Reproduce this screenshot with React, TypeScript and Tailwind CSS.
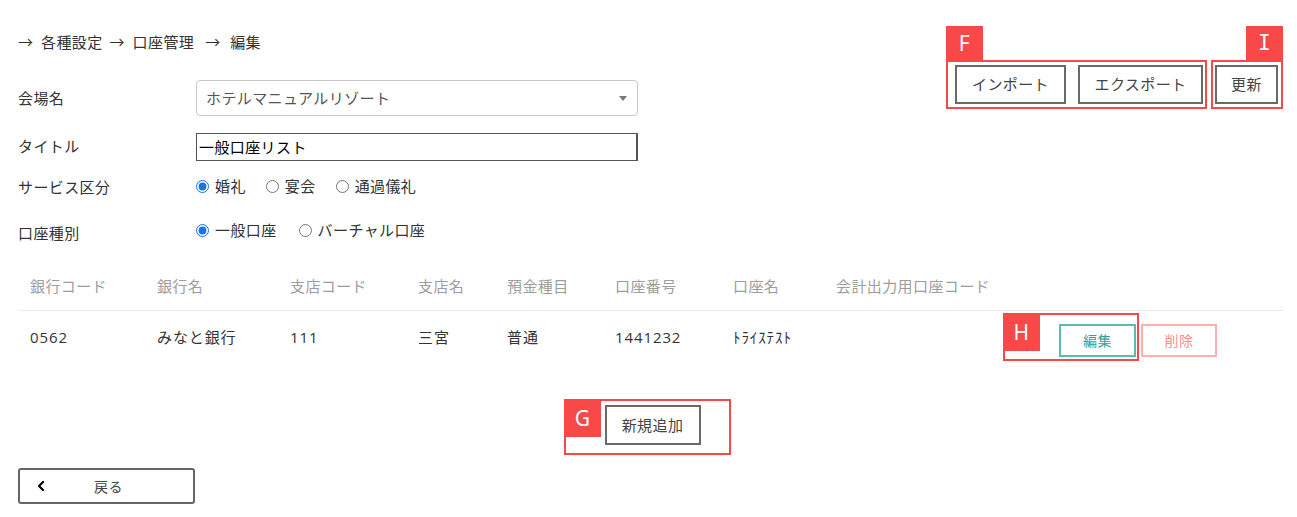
import React from "react";
import { ChevronLeft } from "lucide-react";

const jp = { fontFamily: '"Noto Sans CJK JP", "Noto Sans", sans-serif' };
const num = { fontFamily: '"Open Sans", "Noto Sans CJK JP", sans-serif' };

function Radio({ checked, label, name }: { checked?: boolean; label: string; name: string }) {
  return (
    <label className="flex items-center gap-[6px] h-[22px]">
      <input type="radio" name={name} defaultChecked={checked} className="m-0 w-[13px] h-[13px] accent-[#1a73e8]" />
      <span>{label}</span>
    </label>
  );
}

const cols = [
  { w: "w-[127px]", h: "銀行コード", v: "0562" },
  { w: "w-[133px]", h: "銀行名", v: "みなと銀行" },
  { w: "w-[128px]", h: "支店コード", v: "111" },
  { w: "w-[89px]", h: "支店名", v: "三宮" },
  { w: "w-[108px]", h: "預金種目", v: "普通" },
  { w: "w-[118px]", h: "口座番号", v: "1441232" },
  { w: "w-[103px]", h: "口座名", v: "ﾄﾗｲｽﾃｽﾄ" },
  { w: "w-[224px]", h: "会計出力用口座コード", v: "" },
];

function Tag({ letter, className, mono }: { letter: string; className: string; mono?: boolean }) {
  return (
    <div
      className={"absolute bg-[#f94848] text-white flex items-center justify-center text-[21px] leading-none " + className}
      style={{ fontFamily: mono ? '"DejaVu Sans Mono", monospace' : '"Noto Sans", sans-serif' }}
    >
      {letter}
    </div>
  );
}

export default function App() {
  return (
    <div className="relative w-[1297px] h-[517px] bg-white text-[#333] text-[15px] tracking-[0.4px] overflow-hidden" style={jp}>
      <div className="pl-[18px] pr-[19px]">
        <div className="flex justify-between">
          {/* left form */}
          <div className="flex flex-col">
            <div className="pt-[31px] h-[54px] leading-[22px] text-[#333] flex gap-[7px]">
              <span className="w-[16px]">→</span><span>各種設定</span><span className="w-[16px]">→</span><span>口座管理</span><span className="w-[18px] ml-[4px]">→</span><span>編集</span>
            </div>
            <div className="mt-[26px] flex items-center h-[36px]">
              <div className="w-[178px] leading-[22px]">会場名</div>
              <div className="w-[442px] h-[36px] rounded-[4px] border border-[#c8c8c8] flex items-center justify-between pl-[9px] pr-[10px] text-[#555]">
                <span>ホテルマニュアルリゾート</span>
                <svg width="8" height="5" viewBox="0 0 8 5"><path d="M0 0h8L4 5z" fill="#777" /></svg>
              </div>
            </div>
            <div className="mt-[17px] flex items-center h-[28px]">
              <div className="w-[178px] leading-[22px] mb-[2px]">タイトル</div>
              <div className="w-[442px] h-[28px] border border-[#555] border-r-2 flex items-center pl-[2px] text-black">一般口座リスト</div>
            </div>
            <div className="mt-[14px] flex items-start h-[22px]">
              <div className="w-[178px] leading-[22px] mt-[1px]">サービス区分</div>
              <div className="flex items-center gap-[20px]">
                <Radio name="svc" checked label="婚礼" />
                <Radio name="svc" label="宴会" />
                <Radio name="svc" label="通過儀礼" />
              </div>
            </div>
            <div className="mt-[22px] flex items-start h-[22px]">
              <div className="w-[178px] leading-[22px] mt-[3px]">口座種別</div>
              <div className="flex items-center gap-[22px]">
                <Radio name="kind" checked label="一般口座" />
                <Radio name="kind" label="バーチャル口座" />
              </div>
            </div>
          </div>
          {/* right buttons */}
          <div className="pt-[65px] flex gap-[12px] h-[104px]">
            <button className="w-[111px] h-[39px] border-2 border-[#6a6a6a] bg-white text-[#444]">インポート</button>
            <button className="w-[125px] h-[39px] border-2 border-[#6a6a6a] bg-white text-[#444]">エクスポート</button>
            <button className="w-[63px] h-[39px] border-2 border-[#6a6a6a] bg-white text-[#444]">更新</button>
          </div>
        </div>

        {/* table */}
        <div className="mt-[22px] w-[1266px]">
          <div className="flex items-center h-[48px] border-b border-[#ebebeb] text-[#9d9d9d]">
            {cols.map((c) => (
              <div key={c.h} className={c.w + " pl-[12px]"}>{c.h}</div>
            ))}
          </div>
          <div className="flex items-center h-[52px]">
            {cols.map((c) => (
              <div key={c.h} className={c.w + " pl-[12px] tracking-[0.9px]"} style={num}>{c.v}</div>
            ))}
            <div className="flex items-center gap-[5px] pl-[11px] mt-[6px]">
              <button className="w-[77px] h-[33px] border-2 border-[#5bbcae] bg-white text-[#2fa592] text-[14px]">編集</button>
              <button className="w-[76px] h-[33px] border-2 border-[#ffb0ae] bg-white text-[#ff8f8c] text-[14px]">削除</button>
            </div>
          </div>
        </div>

        <div className="mt-[42px] w-[1266px] flex justify-center">
          <button className="ml-[3px] w-[96px] h-[40px] border-2 border-[#6a6a6a] bg-white text-[#444]">新規追加</button>
        </div>

        <div className="mt-[23px]">
          <button className="w-[177px] h-[36px] rounded-[3px] border-2 border-[#666] bg-white flex items-center text-[#444] text-[14px]">
            <ChevronLeft size={16} strokeWidth={3.2} className="ml-[13px] text-black" />
            <span className="ml-[45px]">戻る</span>
          </button>
        </div>
      </div>

      {/* annotation overlays */}
      <div className="absolute left-[946px] top-[60px] w-[261px] h-[49px] border-2 border-[#f94848]" />
      <Tag letter="F" className="left-[946px] top-[26px] w-[37px] h-[35px]" />
      <div className="absolute left-[1211px] top-[60px] w-[72px] h-[49px] border-2 border-[#f94848]" />
      <Tag letter="I" mono className="left-[1246px] top-[26px] w-[37px] h-[35px]" />
      <div className="absolute left-[1003px] top-[313px] w-[136px] h-[48px] border-2 border-[#f94848]" />
      <Tag letter="H" className="left-[1003px] top-[313px] w-[37px] h-[38px]" />
      <div className="absolute left-[564px] top-[399px] w-[167px] h-[56px] border-2 border-[#f94848]" />
      <Tag letter="G" className="left-[564px] top-[399px] w-[37px] h-[38px]" />
    </div>
  );
}
